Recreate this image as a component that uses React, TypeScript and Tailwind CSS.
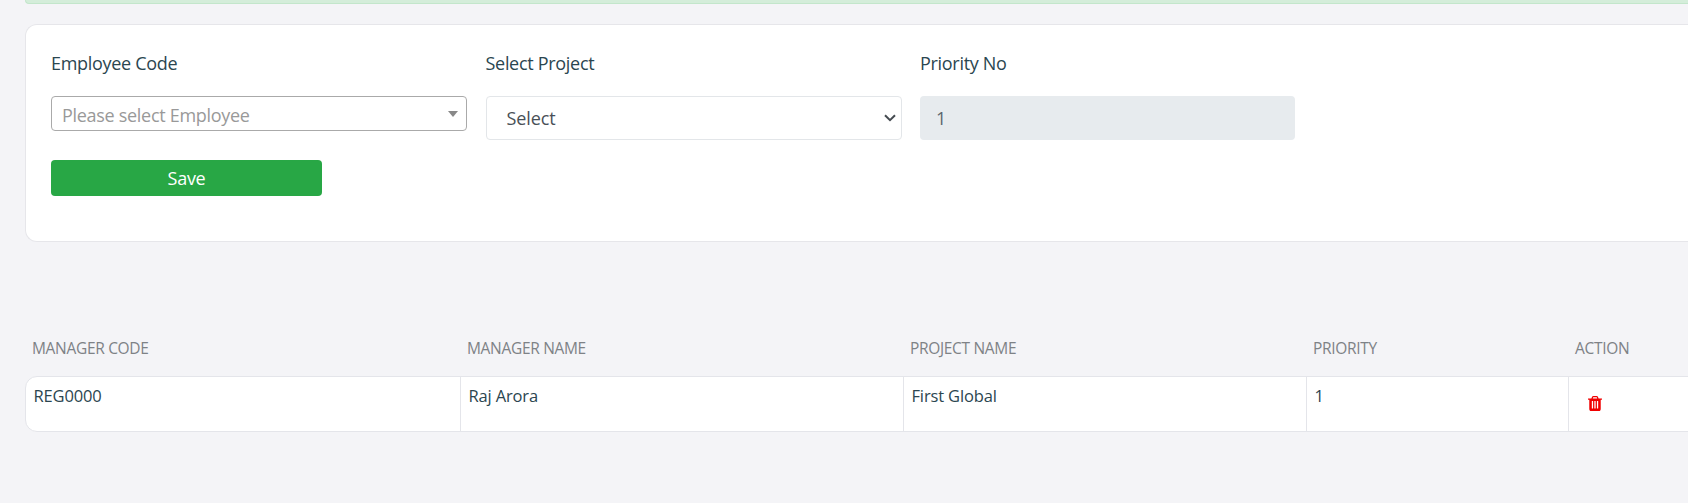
import React from "react";

const columns = ["Manager Code", "Manager Name", "Project Name", "Priority", "Action"];
const row = ["REG0000", "Raj Arora", "First Global", "1"];

function TrashIcon() {
  return (
    <svg viewBox="192 128 1408 1536" className="h-[15px] w-[14px]" fill="currentColor" preserveAspectRatio="none">
      <path d="M704 1376v-704q0-14-9-23t-23-9h-64q-14 0-23 9t-9 23v704q0 14 9 23t23 9h64q14 0 23-9t9-23zm256 0v-704q0-14-9-23t-23-9h-64q-14 0-23 9t-9 23v704q0 14 9 23t23 9h64q14 0 23-9t9-23zm256 0v-704q0-14-9-23t-23-9h-64q-14 0-23 9t-9 23v704q0 14 9 23t23 9h64q14 0 23-9t9-23zm-544-992h448l-48-117q-7-9-17-11h-317q-10 2-17 11zm928 32v64q0 14-9 23t-23 9h-96v948q0 83-47 143.5t-113 60.5h-832q-66 0-113-58.5t-47-141.5v-952h-96q-14 0-23-9t-9-23v-64q0-14 9-23t23-9h309l70-167q15-37 54-63t79-26h320q40 0 79 26t54 63l70 167h309q14 0 23 9t9 23z" />
    </svg>
  );
}

export default function App() {
  return (
    <div className="h-[503px] overflow-hidden bg-[#f4f4f7] pl-[25px] font-['Open_Sans',sans-serif] text-[#212529]">
      <div className="h-1 rounded-bl-[4px] border-b border-l border-[#c3e6cb] bg-[#d4edda]" />

      <section className="mt-5 h-[218px] rounded-l-[12px] border border-r-0 border-[#e6e6ea] bg-white pt-[25px] pl-[25px]">
        <div className="grid grid-cols-[416px_416px_375px] gap-x-[18.5px] text-[18px] tracking-[-0.3px] text-[#2b4650]">
          <label className="h-[46px] leading-[27px]">Employee Code</label>
          <label className="h-[46px] leading-[27px]">Select Project</label>
          <label className="h-[46px] leading-[27px]">Priority No</label>
          <div className="flex h-[35px] items-center justify-between rounded-[4px] border border-[#aaaaaa] pr-[8px] pl-[10px] text-[#999999]">
            <span className="pt-[3px] leading-[27px]">Please select Employee</span>
            <svg className="h-[6px] w-[10px]" viewBox="0 0 10 6" fill="#888888">
              <path d="M0 0h10L5 6z" />
            </svg>
          </div>
          <div className="flex h-[44px] items-center justify-between rounded-[4px] border border-[#e3e6e9] pr-[5px] pl-[20px] text-[#495057]">
            <span className="tracking-[-0.1px]">Select</span>
            <svg className="h-[8px] w-[12px]" viewBox="0 0 12 8" fill="none" stroke="#454b51" strokeWidth="2">
              <path d="M1 1.2l5 5 5-5" />
            </svg>
          </div>
          <div className="flex h-[44px] items-center rounded-[4px] bg-[#e7ebee] pl-[16px] text-[#5c666f]">1</div>
        </div>
        <button className="mt-[20px] flex h-[36px] w-[271px] items-center justify-center rounded-[4px] bg-[#28a745] text-[18px] font-medium tracking-[-0.3px] text-white">
          Save
        </button>
      </section>

      <section className="mt-[91px] w-[1700px]">
        <div className="grid h-[43px] grid-cols-[435px_443px_403px_262px_1fr] text-[15.5px] leading-[30px] tracking-[-0.32px] text-[#7e8286] uppercase">
          {columns.map((name) => (
            <div key={name} className="pl-[7px]">{name}</div>
          ))}
        </div>
        <div className="grid h-[56px] grid-cols-[435px_443px_403px_262px_1fr] rounded-l-[12px] border border-[#e4e5ea] bg-white text-[16.5px] leading-[24px] tracking-[-0.15px] text-[#2b4650]">
          {row.map((value) => (
            <div key={value} className="border-r border-[#e4e5ea] pt-[7px] pl-[7.5px]">{value}</div>
          ))}
          <div className="pt-[19px] pl-[19px] text-[#f00000]">
            <TrashIcon />
          </div>
        </div>
      </section>
    </div>
  );
}
